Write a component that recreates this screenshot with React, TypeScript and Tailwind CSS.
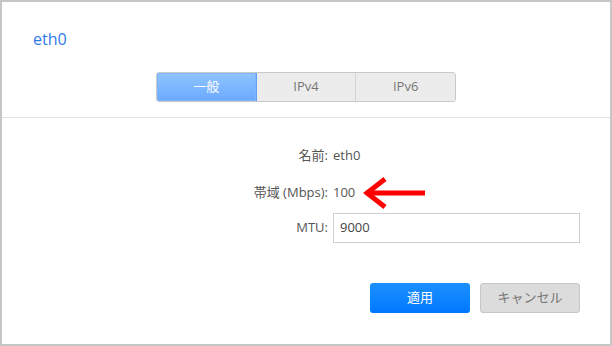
import React from "react";

export default function App() {
  const font = { fontFamily: '"Open Sans", "Noto Sans CJK JP", sans-serif' };
  return (
    <div
      className="w-[612px] h-[346px] border-2 border-[#c6c6c6] bg-white flex flex-col text-[13px] text-[#555]"
      style={font}
    >
      <div className="pl-[31px] pt-[26px] h-[70px] text-[16px] text-[#2f7be6] leading-[22px]">eth0</div>
      <div className="flex justify-center">
        <div className="flex h-[30px] w-[300px] rounded-[3px] border border-[#c9c9c9] overflow-hidden">
          <div className="flex-1 flex items-center justify-center text-white bg-gradient-to-b from-[#90c4ff] to-[#6aa9ff] border-r border-[#5f9ef2] shadow-[inset_0_0_0_1px_#7db5ff]">
            一般
          </div>
          <div className="flex-1 flex items-center justify-center bg-[#ececec] text-[#777] border-r border-[#d4d4d4]">
            IPv4
          </div>
          <div className="flex-1 flex items-center justify-center bg-[#ececec] text-[#777]">IPv6</div>
        </div>
      </div>
      <div className="mt-[15px] h-px bg-[#e2e2e2]" />
      <div className="flex flex-col pt-[28px]">
        <div className="flex items-center h-[20px]">
          <div className="w-[326px] text-right">名前:</div>
          <div className="ml-[5px]">eth0</div>
        </div>
        <div className="flex items-center h-[20px] mt-[17px]">
          <div className="w-[326px] text-right">帯域 (Mbps):</div>
          <div className="ml-[5px] w-[31px]">100</div>
          <svg width="64" height="32" viewBox="0 0 64 32" className="ml-[-1px]">
            <path d="M3 16 H62" stroke="#ff0000" strokeWidth="5" fill="none" />
            <path d="M22 2 L4 16 L22 30" stroke="#ff0000" strokeWidth="5" fill="none" strokeLinejoin="miter" />
          </svg>
        </div>
        <div className="flex items-center h-[30px] mt-[10px]">
          <div className="w-[326px] text-right">MTU:</div>
          <div className="ml-[5px] w-[247px] h-[30px] border border-[#d0d0d0] flex items-center pl-[6px] text-[#444]">
            9000
          </div>
        </div>
      </div>
      <div className="flex justify-end gap-[10px] pr-[30px] mt-[40px]">
        <div className="w-[100px] h-[30px] rounded-[3px] bg-gradient-to-b from-[#1c90ff] to-[#0078ff] text-white flex items-center justify-center">
          適用
        </div>
        <div className="w-[100px] h-[30px] rounded-[3px] bg-[#dcdcdc] border border-[#c6c6c6] text-[#777] flex items-center justify-center">
          キャンセル
        </div>
      </div>
    </div>
  );
}
